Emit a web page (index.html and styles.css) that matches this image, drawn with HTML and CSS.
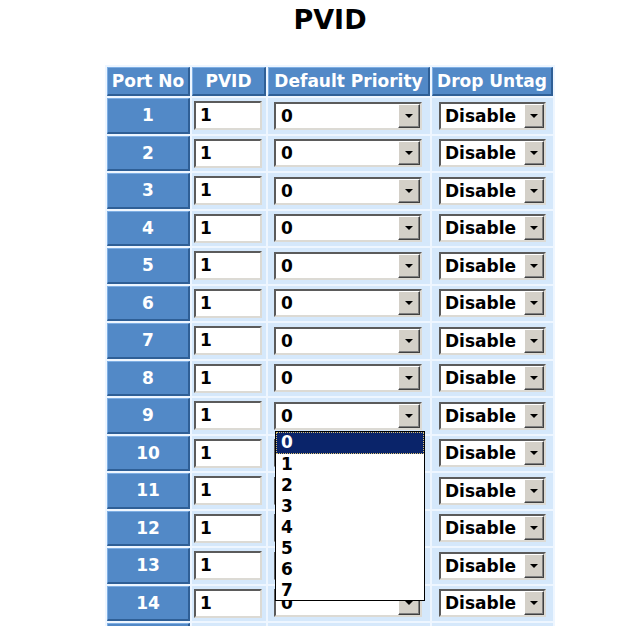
FILE: index.html
```html
<!DOCTYPE html>
<html>
<head>
<meta charset="utf-8">
<title>PVID</title>
<link rel="stylesheet" href="styles.css">
</head>
<body>
<div class="page">
  <h1 class="title">PVID</h1>
  <div class="grid">
    <div class="hd">Port No</div>
    <div class="hd">PVID</div>
    <div class="hd">Default Priority</div>
    <div class="hd">Drop Untag</div>

    <div class="port">1</div><div class="cell"><div class="inp">1</div></div><div class="cell"><div class="sel dp"><span class="val">0</span><span class="btn"></span></div></div><div class="cell"><div class="sel du"><span class="val">Disable</span><span class="btn"></span></div></div>
    <div class="port">2</div><div class="cell"><div class="inp">1</div></div><div class="cell"><div class="sel dp"><span class="val">0</span><span class="btn"></span></div></div><div class="cell"><div class="sel du"><span class="val">Disable</span><span class="btn"></span></div></div>
    <div class="port">3</div><div class="cell"><div class="inp">1</div></div><div class="cell"><div class="sel dp"><span class="val">0</span><span class="btn"></span></div></div><div class="cell"><div class="sel du"><span class="val">Disable</span><span class="btn"></span></div></div>
    <div class="port">4</div><div class="cell"><div class="inp">1</div></div><div class="cell"><div class="sel dp"><span class="val">0</span><span class="btn"></span></div></div><div class="cell"><div class="sel du"><span class="val">Disable</span><span class="btn"></span></div></div>
    <div class="port">5</div><div class="cell"><div class="inp">1</div></div><div class="cell"><div class="sel dp"><span class="val">0</span><span class="btn"></span></div></div><div class="cell"><div class="sel du"><span class="val">Disable</span><span class="btn"></span></div></div>
    <div class="port">6</div><div class="cell"><div class="inp">1</div></div><div class="cell"><div class="sel dp"><span class="val">0</span><span class="btn"></span></div></div><div class="cell"><div class="sel du"><span class="val">Disable</span><span class="btn"></span></div></div>
    <div class="port">7</div><div class="cell"><div class="inp">1</div></div><div class="cell"><div class="sel dp"><span class="val">0</span><span class="btn"></span></div></div><div class="cell"><div class="sel du"><span class="val">Disable</span><span class="btn"></span></div></div>
    <div class="port">8</div><div class="cell"><div class="inp">1</div></div><div class="cell"><div class="sel dp"><span class="val">0</span><span class="btn"></span></div></div><div class="cell"><div class="sel du"><span class="val">Disable</span><span class="btn"></span></div></div>
    <div class="port">9</div><div class="cell"><div class="inp">1</div></div><div class="cell"><div class="sel dp"><span class="val">0</span><span class="btn"></span></div></div><div class="cell"><div class="sel du"><span class="val">Disable</span><span class="btn"></span></div></div>
    <div class="port">10</div><div class="cell"><div class="inp">1</div></div><div class="cell"><div class="sel dp"><span class="val">0</span><span class="btn"></span></div></div><div class="cell"><div class="sel du"><span class="val">Disable</span><span class="btn"></span></div></div>
    <div class="port">11</div><div class="cell"><div class="inp">1</div></div><div class="cell"><div class="sel dp"><span class="val">0</span><span class="btn"></span></div></div><div class="cell"><div class="sel du"><span class="val">Disable</span><span class="btn"></span></div></div>
    <div class="port">12</div><div class="cell"><div class="inp">1</div></div><div class="cell"><div class="sel dp"><span class="val">0</span><span class="btn"></span></div></div><div class="cell"><div class="sel du"><span class="val">Disable</span><span class="btn"></span></div></div>
    <div class="port">13</div><div class="cell"><div class="inp">1</div></div><div class="cell"><div class="sel dp"><span class="val">0</span><span class="btn"></span></div></div><div class="cell"><div class="sel du"><span class="val">Disable</span><span class="btn"></span></div></div>
    <div class="port">14</div><div class="cell"><div class="inp">1</div></div><div class="cell"><div class="sel dp"><span class="val">0</span><span class="btn"></span></div></div><div class="cell"><div class="sel du"><span class="val">Disable</span><span class="btn"></span></div></div>
    <div class="port">15</div><div class="cell"><div class="inp">1</div></div><div class="cell"><div class="sel dp"><span class="val">0</span><span class="btn"></span></div></div><div class="cell"><div class="sel du"><span class="val">Disable</span><span class="btn"></span></div></div>

    <ul class="list">
      <li class="opt active">0</li>
      <li class="opt">1</li>
      <li class="opt">2</li>
      <li class="opt">3</li>
      <li class="opt">4</li>
      <li class="opt">5</li>
      <li class="opt">6</li>
      <li class="opt">7</li>
    </ul>
  </div>
</div>
</body>
</html>
```

FILE: styles.css
```css
html, body {
  margin: 0;
  padding: 0;
  background: #ffffff;
  overflow: hidden;
}

body {
  font-family: "DejaVu Sans", Verdana, sans-serif;
  font-weight: bold;
  font-size: 17px;
  color: #000000;
}

.page {
  width: 450px;
  margin-left: 105px;
}

.title {
  margin: 4px 0 0 0;
  height: 61px;
  font-size: 27px;
  line-height: 32px;
  font-weight: bold;
  text-align: center;
  color: #000000;
}

.grid {
  position: relative;
  display: grid;
  grid-template-columns: 83px 74px 162px 121px;
  grid-template-rows: 29px;
  grid-auto-rows: 35.5px;
  gap: 2px;
  padding: 2px;
  background: #eef6ff;
}

.hd,
.port {
  display: flex;
  align-items: center;
  justify-content: center;
  background: #5289c7;
  color: #ffffff;
  white-space: nowrap;
  border-top: 1px solid #7eaee3;
  border-left: 1px solid #7eaee3;
  border-right: 2px solid #2f5f96;
  border-bottom: 2px solid #2f5f96;
  box-sizing: border-box;
}

.hd {
  padding-bottom: 1px;
}

.cell {
  display: flex;
  align-items: center;
  background: #d5e8fb;
}

.inp {
  width: 68px;
  height: 29px;
  margin-left: 2px;
  box-sizing: border-box;
  background: #ffffff;
  border-top: 2px solid #5b5b5b;
  border-left: 2px solid #5b5b5b;
  border-right: 2px solid #dcdad4;
  border-bottom: 2px solid #dcdad4;
  padding-left: 4px;
  line-height: 25px;
}

.sel {
  display: flex;
  align-items: stretch;
  height: 28px;
  box-sizing: border-box;
  background: #ffffff;
  border-top: 2px solid #5b5b5b;
  border-left: 2px solid #5b5b5b;
  border-right: 2px solid #dcdad4;
  border-bottom: 2px solid #dcdad4;
}

.sel.dp {
  width: 148px;
  margin-left: 6px;
}

.sel.du {
  width: 107px;
  margin-left: 7px;
}

.val {
  flex: 1;
  padding-left: 5px;
  line-height: 24px;
  overflow: hidden;
  white-space: nowrap;
}

.sel.du .val {
  padding-left: 4px;
}

.btn {
  position: relative;
  width: 22px;
  box-sizing: border-box;
  background: #d4d0c8;
  border-top: 1px solid #ffffff;
  border-left: 1px solid #ffffff;
  border-right: 1px solid #404040;
  border-bottom: 1px solid #404040;
  box-shadow: inset -1px -1px 0 #808080;
}

.sel.du .btn {
  width: 20px;
}

.btn::after {
  content: "";
  position: absolute;
  left: 50%;
  top: 50%;
  margin-left: -4px;
  margin-top: -2px;
  border-left: 4px solid transparent;
  border-right: 4px solid transparent;
  border-top: 4px solid #000000;
}

.list {
  position: absolute;
  left: 170px;
  top: 366px;
  width: 150px;
  height: 170px;
  margin: 0;
  padding: 0;
  list-style: none;
  box-sizing: border-box;
  background: #ffffff;
  border: 1px solid #000000;
  overflow: hidden;
}

.opt {
  height: 21px;
  line-height: 21px;
  padding-left: 5px;
  color: #000000;
}

.opt.active {
  height: 22px;
  background: #0a246a;
  color: #ffffff;
  outline: 1px dotted #d8c070;
  outline-offset: -1px;
}
```
